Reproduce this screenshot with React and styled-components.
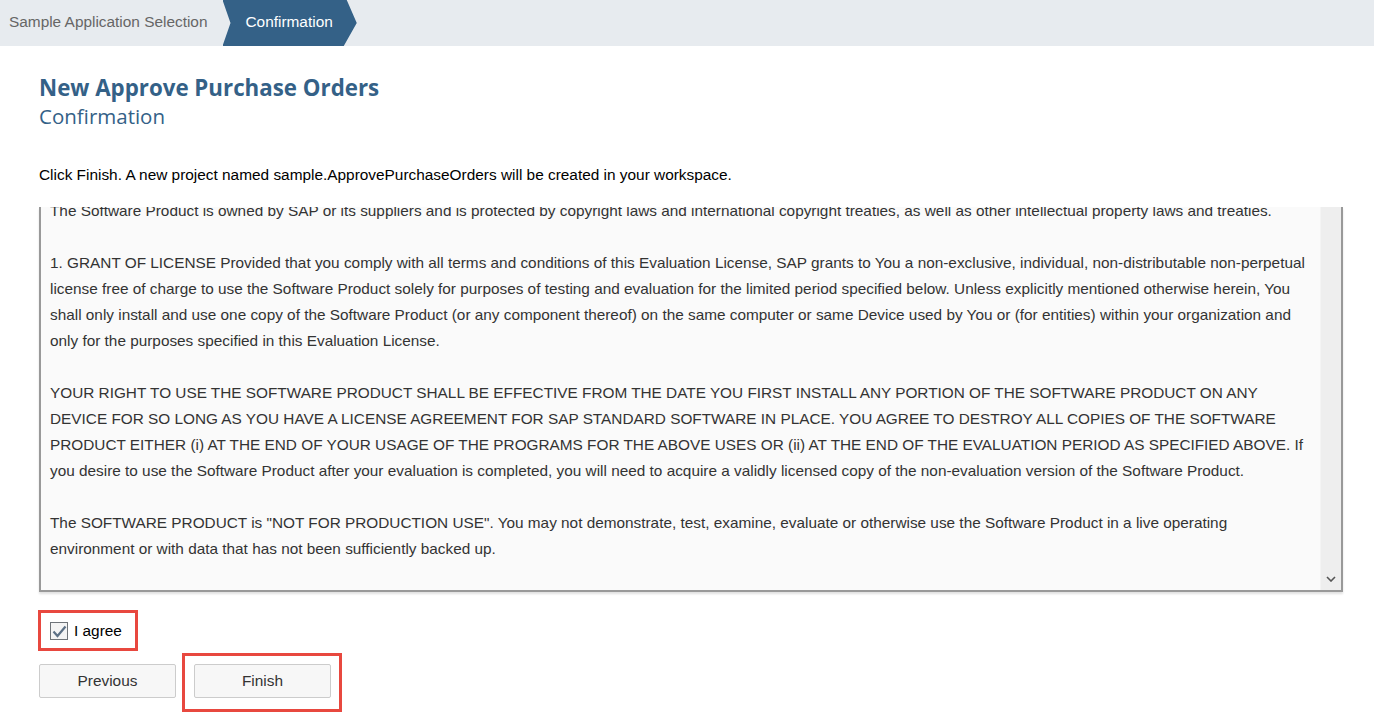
import React from "react";
import styled, { createGlobalStyle } from "styled-components";

const Global = createGlobalStyle`
  html, body { margin: 0; padding: 0; background: #ffffff; }
  body { font-family: "Liberation Sans", Arial, sans-serif; color: #000; }
`;

const Page = styled.div`
  width: 1374px;
  height: 721px;
  overflow: hidden;
  display: flex;
  flex-direction: column;
`;

const Breadcrumb = styled.nav`
  height: 46px;
  background: #e7ebef;
  display: flex;
  align-items: stretch;
  flex-shrink: 0;
`;

const Step = styled.div`
  display: flex;
  align-items: center;
  padding-bottom: 3px;
  box-sizing: border-box;
  font-size: 15.4px;
  white-space: nowrap;
  color: ${(p) => (p.$active ? "#ffffff" : "#666666")};
  background: ${(p) => (p.$active ? "#346187" : "transparent")};
  padding-left: ${(p) => (p.$active ? "23px" : "9px")};
  padding-right: ${(p) => (p.$active ? "24px" : "15px")};
  clip-path: ${(p) =>
    p.$active
      ? "polygon(0 0, calc(100% - 10px) 0, 100% 50%, calc(100% - 13px) 100%, 0 100%, 8px 50%)"
      : "none"};
`;

const Main = styled.main`
  padding: 0 31px 0 39px;
  display: flex;
  flex-direction: column;
`;

const Title = styled.h1`
  margin: 28px 0 0;
  font-family: "Open Sans", "Noto Sans", sans-serif;
  font-weight: 700;
  font-size: 22.3px;
  line-height: 28px;
  color: #346187;
`;

const Subtitle = styled.h2`
  margin: -1px 0 0;
  font-family: "Open Sans", "Noto Sans", sans-serif;
  font-weight: 400;
  font-size: 20.5px;
  line-height: 30px;
  color: #346187;
`;

const Intro = styled.p`
  margin: 34px 0 0;
  font-size: 15.4px;
  line-height: 20px;
  color: #000;
`;

const LicenseBox = styled.div`
  margin-top: 22px;
  height: 383px;
  display: flex;
  background: #fafafa;
  border-left: 2px solid #999999;
  border-right: 2px solid #999999;
  border-bottom: 2px solid #999999;
  box-shadow: 0 2px 2px rgba(0, 0, 0, 0.12);
`;

const LicenseScroll = styled.div`
  flex: 1;
  overflow: hidden;
  padding: 0 10px 0 9px;
`;

const LicenseText = styled.div`
  margin-top: -9px;
  font-size: 15.35px;
  line-height: 26px;
  color: #333333;
`;

const Para = styled.p`
  margin: 0 0 26px;
`;

const Track = styled.div`
  width: 20px;
  background: #eeeeee;
  display: flex;
  flex-direction: column;
  justify-content: flex-end;
  align-items: center;
  padding-bottom: 8px;
  border-left: 1px solid #f4f4f4;
`;

const AgreeMark = styled.div`
  margin: 18px 0 0 -1px;
  align-self: flex-start;
  border: 3px solid #e8483f;
  padding: 9px 13px 8px 9px;
  display: flex;
  align-items: center;
  gap: 6px;
  font-size: 15.4px;
  color: #000;
`;

const Box = styled.span`
  width: 16px;
  height: 16px;
  border: 1px solid #6f7479;
  background: #f4f4f4;
  display: flex;
  align-items: center;
  justify-content: center;
`;

const Actions = styled.div`
  display: flex;
  align-items: flex-start;
  gap: 6px;
  margin-top: 2px;
`;

const Button = styled.button`
  width: 137px;
  height: 34px;
  margin-top: ${(p) => (p.$plain ? "11px" : "0")};
  background: #f7f7f7;
  border: 1px solid #cccccc;
  border-radius: 2px;
  font-family: "Liberation Sans", Arial, sans-serif;
  font-size: 15.4px;
  color: #333333;
`;

const Highlight = styled.div`
  border: 3px solid #e8483f;
  padding: 8px 8px 11px 9px;
`;

export default function App() {
  return (
    <Page>
      <Global />
      <Breadcrumb>
        <Step>Sample Application Selection</Step>
        <Step $active>Confirmation</Step>
      </Breadcrumb>
      <Main>
        <Title>New Approve Purchase Orders</Title>
        <Subtitle>Confirmation</Subtitle>
        <Intro>
          Click Finish. A new project named sample.ApprovePurchaseOrders will be created in your workspace.
        </Intro>
        <LicenseBox>
          <LicenseScroll>
            <LicenseText>
              <Para>
                The Software Product is owned by SAP or its suppliers and is protected by copyright laws and
                international copyright treaties, as well as other intellectual property laws and treaties.
              </Para>
              <Para>
                1. GRANT OF LICENSE Provided that you comply with all terms and conditions of this Evaluation
                License, SAP grants to You a non-exclusive, individual, non-distributable non-perpetual license
                free of charge to use the Software Product solely for purposes of testing and evaluation for the
                limited period specified below. Unless explicitly mentioned otherwise herein, You shall only
                install and use one copy of the Software Product (or any component thereof) on the same computer
                or same Device used by You or (for entities) within your organization and only for the purposes
                specified in this Evaluation License.
              </Para>
              <Para>
                YOUR RIGHT TO USE THE SOFTWARE PRODUCT SHALL BE EFFECTIVE FROM THE DATE YOU FIRST INSTALL ANY
                PORTION OF THE SOFTWARE PRODUCT ON ANY DEVICE FOR SO LONG AS YOU HAVE A LICENSE AGREEMENT FOR SAP
                STANDARD SOFTWARE IN PLACE. YOU AGREE TO DESTROY ALL COPIES OF THE SOFTWARE PRODUCT EITHER (i) AT
                THE END OF YOUR USAGE OF THE PROGRAMS FOR THE ABOVE USES OR (ii) AT THE END OF THE EVALUATION
                PERIOD AS SPECIFIED ABOVE. If you desire to use the Software Product after your evaluation is
                completed, you will need to acquire a validly licensed copy of the non-evaluation version of the
                Software Product.
              </Para>
              <Para>
                The SOFTWARE PRODUCT is "NOT FOR PRODUCTION USE". You may not demonstrate, test, examine, evaluate
                or otherwise use the Software Product in a live operating environment or with data that has not
                been sufficiently backed up.
              </Para>
            </LicenseText>
          </LicenseScroll>
          <Track>
            <svg width="10" height="6" viewBox="0 0 10 6">
              <path d="M1 1 L5 5 L9 1" fill="none" stroke="#555" strokeWidth="1.6" />
            </svg>
          </Track>
        </LicenseBox>
        <AgreeMark>
          <Box>
            <svg width="15" height="13" viewBox="0 0 15 13">
              <path d="M1.5 6.5 L5.5 11 L13.5 1.5" fill="none" stroke="#5d7186" strokeWidth="2.2" />
            </svg>
          </Box>
          I agree
        </AgreeMark>
        <Actions>
          <Button $plain>Previous</Button>
          <Highlight>
            <Button>Finish</Button>
          </Highlight>
        </Actions>
      </Main>
    </Page>
  );
}
